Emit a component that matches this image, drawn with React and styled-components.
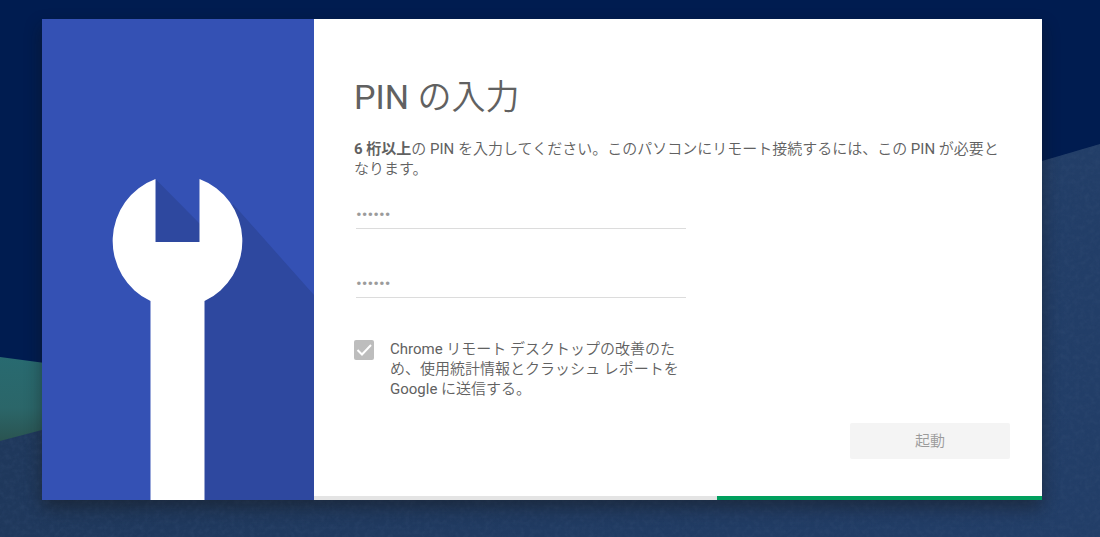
import React, { useState } from "react";
import styled, { createGlobalStyle } from "styled-components";

const GlobalStyle = createGlobalStyle`
  * {
    box-sizing: border-box;
  }

  body {
    margin: 0;
    background: #001c50;
    color: #616161;
    font: 15px/20px Roboto, "Noto Sans CJK JP DemiLight", "Noto Sans CJK JP Light", "Noto Sans CJK JP", sans-serif;
  }
`;

const Backdrop = () => (
  <BackdropSvg viewBox="0 0 1100 537" preserveAspectRatio="none" aria-hidden="true">
    <defs>
      <linearGradient id="teal" x1="0" y1="0" x2="0" y2="1">
        <stop offset="0" stopColor="#286a70" />
        <stop offset="0.6" stopColor="#2b6669" />
        <stop offset="1" stopColor="#2a5350" />
      </linearGradient>
      <linearGradient id="steel" x1="0" y1="0" x2="1" y2="0">
        <stop offset="0" stopColor="#1f385c" />
        <stop offset="1" stopColor="#223e68" />
      </linearGradient>
      <filter id="grain" x="0" y="0" width="100%" height="100%">
        <feTurbulence type="fractalNoise" baseFrequency="0.2" numOctaves="3" result="noise" />
        <feColorMatrix
          in="noise"
          type="matrix"
          values="0 0 0 0 0.25  0 0 0 0 0.35  0 0 0 0 0.5  0.4 0 0 0 -0.15"
          result="specks"
        />
        <feComposite in="specks" in2="SourceGraphic" operator="in" result="cut" />
        <feMerge>
          <feMergeNode in="SourceGraphic" />
          <feMergeNode in="cut" />
        </feMerge>
      </filter>
    </defs>
    <rect width="1100" height="537" fill="#001c50" />
    <path d="M0 357 L60 365 V430 L0 442 Z" fill="url(#teal)" />
    <path
      d="M0 441 L42 430 L1042 161 L1100 144 V537 H0 Z"
      fill="url(#steel)"
      filter="url(#grain)"
      colorInterpolationFilters="sRGB"
    />
  </BackdropSvg>
);

const Wrench = () => (
  <WrenchSvg viewBox="0 0 272 481" preserveAspectRatio="xMidYMax slice" aria-hidden="true">
    <path d="M113.5 160 L158 205 V223 H113.5 Z" fill="#2e489f" />
    <path d="M191 185 L272 276 V481 H160 V282 L180 230 Z" fill="#2e489f" />
    <path
      d="M113.5 160 A65 66 0 0 0 108.5 282 V481 H162.5 V282 A65 66 0 0 0 157.5 160 V223 H113.5 Z"
      fill="#fff"
    />
  </WrenchSvg>
);

const App = () => {
  const [sendStats, setSendStats] = useState(true);

  return (
    <Page>
      <GlobalStyle />
      <Backdrop />
      <Card>
        <Side>
          <Wrench />
        </Side>
        <Main>
          <Content>
            <Title>PIN の入力</Title>
            <Description>
              <b>6 桁以上</b>の PIN を入力してください。このパソコンにリモート接続するには、この PIN が必要となります。
            </Description>
            <Fields>
              <PinInput type="password" defaultValue="123456" aria-label="PIN" disabled />
              <PinInput type="password" defaultValue="123456" aria-label="PIN の再入力" disabled />
              <StatsLabel>
                <CheckHolder>
                  <Checkbox
                    type="checkbox"
                    checked={sendStats}
                    onChange={(e) => setSendStats(e.target.checked)}
                    disabled
                  />
                  <CheckMark viewBox="0 0 20 20" aria-hidden="true">
                    <path d="M3.5 10 L8 14.5 L17 5" fill="none" stroke="#fff" strokeWidth="2" />
                  </CheckMark>
                </CheckHolder>
                <span>
                  Chrome リモート デスクトップの改善のため、使用統計情報とクラッシュ レポートを Google に送信する。
                </span>
              </StatsLabel>
            </Fields>
            <StartButton type="button" disabled>
              起動
            </StartButton>
          </Content>
          <Progress role="progressbar" aria-label="起動">
            <ProgressBar />
          </Progress>
        </Main>
      </Card>
    </Page>
  );
};

const Page = styled.div`
  position: relative;
  min-height: 100vh;
  padding: 19px 58px 37px 42px;
  overflow: hidden;
`;

const BackdropSvg = styled.svg`
  position: absolute;
  inset: 0;
  width: 100%;
  height: 100%;

  filter {
    color-interpolation-filters: sRGB;
  }
`;

const Card = styled.main`
  position: relative;
  display: grid;
  grid-template-columns: 272px 1fr;
  background: #fff;
  box-shadow: 0 8px 16px rgba(20, 20, 20, 0.45);
`;

const Side = styled.div`
  position: relative;
  background: #3451b4;
`;

const WrenchSvg = styled.svg`
  position: absolute;
  inset: 0;
  width: 100%;
  height: 100%;
`;

const Main = styled.div`
  display: flex;
  flex-direction: column;
  min-width: 0;
`;

const Content = styled.div`
  flex: 1;
  display: flex;
  flex-direction: column;
  padding: 58px 32px 37px 40px;
`;

const Title = styled.h1`
  margin: 0;
  font-size: 34px;
  line-height: 40px;
  font-weight: 400;
`;

const Description = styled.p`
  margin: 22px 0 21px;

  b {
    font-family: Roboto, "Noto Sans CJK JP", sans-serif;
    font-weight: 700;
  }
`;

const Fields = styled.div`
  display: flex;
  flex-direction: column;
  gap: 40px;
  max-width: 332px;
`;

const PinInput = styled.input`
  height: 29px;
  margin-left: 2px;
  padding: 0;
  border: 0;
  border-bottom: 1px solid #dcdcdc;
  border-radius: 0;
  background: transparent;
  color: #9b9b9b;
  font-family: Roboto, sans-serif;
  font-size: 17px;
`;

const StatsLabel = styled.label`
  display: grid;
  grid-template-columns: 20px 1fr;
  gap: 16px;
  margin-top: 1px;
`;

const CheckHolder = styled.span`
  display: grid;
  align-content: start;
  padding-top: 1px;

  > * {
    grid-area: 1 / 1;
  }
`;

const Checkbox = styled.input`
  appearance: none;
  width: 20px;
  height: 20px;
  margin: 0;
  border-radius: 2px;
  background: #bdbdbd;
`;

const CheckMark = styled.svg`
  width: 20px;
  height: 20px;
  pointer-events: none;

  ${Checkbox}:not(:checked) + & {
    display: none;
  }
`;

const StartButton = styled.button`
  align-self: flex-end;
  width: 160px;
  height: 36px;
  margin-top: 24px;
  border: 0;
  border-radius: 2px;
  background: #f4f4f4;
  color: #9b9b9b;
  font: inherit;
`;

const Progress = styled.div`
  display: flex;
  justify-content: flex-end;
  height: 4px;
  background: #e4e4e4;
`;

const ProgressBar = styled.div`
  width: 44.6%;
  background: #009f5d;
`;

export default App;
